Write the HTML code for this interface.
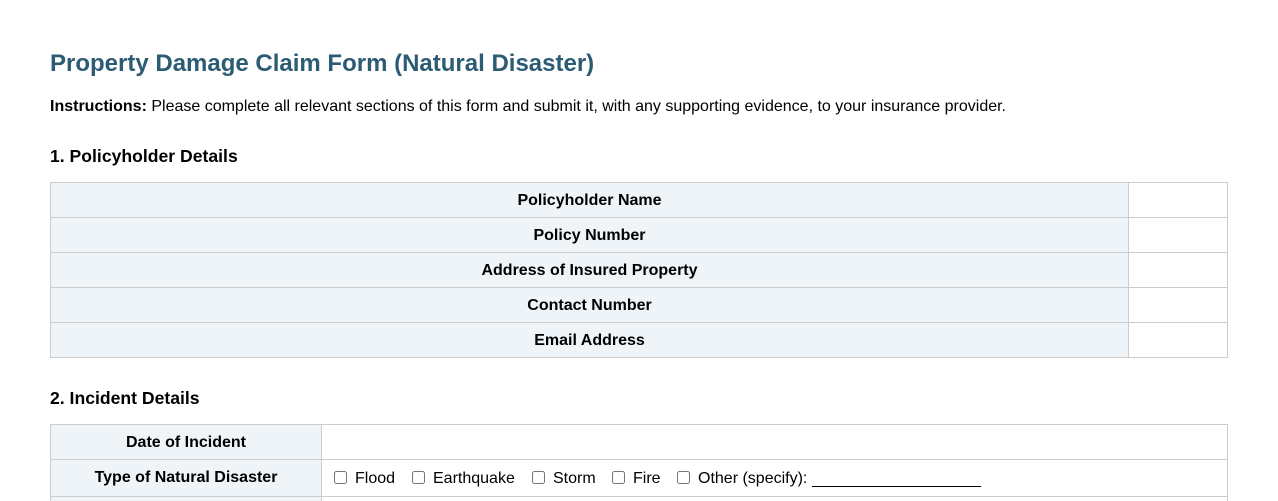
<!DOCTYPE html>
<html lang="en">
<head>
<meta charset="utf-8">
<title>Property Damage Claim Form</title>
<style>
html,body{margin:0;padding:0;width:1278px;height:501px;overflow:hidden;background:#fff}
body{font-family:"Liberation Sans",Arial,sans-serif;color:#000;font-size:16px;position:relative}
.a{position:absolute;white-space:nowrap}
h1{margin:0;font-size:24px;line-height:28px;font-weight:700;color:#2c5c74;left:50px;top:50px}
.i{left:50px;top:98px;line-height:18px}
h2{margin:0;font-size:17.6px;line-height:22px;font-weight:700;left:50px}
table{position:absolute;border-collapse:collapse;table-layout:fixed;left:50px}
td,th{border:1px solid #ccc;padding:0;font-size:16px;font-weight:400;text-align:center}
th{background:#eff4f8;font-weight:700;padding-top:1px;box-sizing:border-box}
td{text-align:left}
.box{position:absolute;width:13px;height:13px;box-sizing:border-box;border:1px solid #767676;border-radius:2.5px;background:#fff;top:471px}
.line{position:absolute;left:812px;top:486px;width:169px;height:1px;background:#000}
.t{top:470px;line-height:18px}
</style>
</head>
<body>
<h1 class="a">Property Damage Claim Form (Natural Disaster)</h1>
<div class="a i"><b>Instructions:</b> Please complete all relevant sections of this form and submit it, with any supporting evidence, to your insurance provider.</div>
<h2 class="a" style="top:145px">1. Policyholder Details</h2>
<table style="top:182px;width:1177px">
<colgroup><col style="width:1078px"><col style="width:99px"></colgroup>
<tr style="height:35px"><th>Policyholder Name</th><td></td></tr>
<tr style="height:35px"><th>Policy Number</th><td></td></tr>
<tr style="height:35px"><th>Address of Insured Property</th><td></td></tr>
<tr style="height:35px"><th>Contact Number</th><td></td></tr>
<tr style="height:35px"><th>Email Address</th><td></td></tr>
</table>
<h2 class="a" style="top:387px">2. Incident Details</h2>
<table style="top:424px;width:1177px">
<colgroup><col style="width:271px"><col style="width:906px"></colgroup>
<tr style="height:35px"><th>Date of Incident</th><td></td></tr>
<tr style="height:37px"><th style="padding-top:0">Type of Natural Disaster</th><td></td></tr>
<tr style="height:4px"><th style="padding:0;border-bottom:0"></th><td style="border-bottom:0"></td></tr>
</table>
<span class="box" style="left:334px"></span><span class="a t" style="left:355px">Flood</span>
<span class="box" style="left:412px"></span><span class="a t" style="left:433px">Earthquake</span>
<span class="box" style="left:532px"></span><span class="a t" style="left:553px">Storm</span>
<span class="box" style="left:612px"></span><span class="a t" style="left:633px">Fire</span>
<span class="box" style="left:677px"></span><span class="a t" style="left:698px">Other (specify):</span>
<div class="line"></div>
</body>
</html>
